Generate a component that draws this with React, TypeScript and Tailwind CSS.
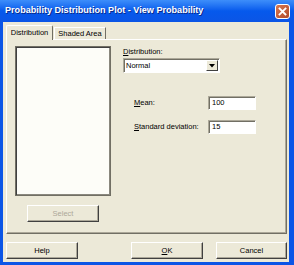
import React from "react";

const font = { fontFamily: '"Liberation Sans", Arial, sans-serif' };

function Btn({ children, disabled, w = "w-[72px]" }: { children: React.ReactNode; disabled?: boolean; w?: string }) {
  return (
    <div
      className={`${w} h-[17px] flex items-center justify-center bg-[#ECE9D8] border border-t-white border-l-white border-b-[#404040] border-r-[#404040] shadow-[inset_-1px_-1px_0_#ACA899] text-[7.5px] ${disabled ? "text-[#ACA899]" : "text-black"}`}
    >
      {children}
    </div>
  );
}

function Field({ value }: { value: string }) {
  return (
    <div className="w-[48px] h-[14px] bg-white border border-t-[#ACA899] border-l-[#ACA899] border-b-white border-r-white shadow-[inset_1px_1px_0_#716F64] flex items-center pl-[3px] text-[7.5px] text-black">
      {value}
    </div>
  );
}

export default function App() {
  return (
    <div className="w-[294px] h-[265px] flex flex-col bg-[#0B55E6] overflow-hidden" style={font}>
      {/* Title bar */}
      <div className="h-[22px] shrink-0 flex items-center justify-between pl-[5px] pr-[4px] bg-gradient-to-b from-[#3D8EFA] via-[#0659EC] to-[#0B55E6]">
        <span className="text-white font-bold text-[9.1px] leading-none whitespace-nowrap [text-shadow:1px_1px_0_#0A2A8A]">
          Probability Distribution Plot - View Probability
        </span>
        <div className="w-[15px] h-[15px] rounded-[3px] border border-white bg-gradient-to-br from-[#D9774F] to-[#B04A2A] flex items-center justify-center">
          <svg width="9" height="9" viewBox="0 0 9 9">
            <path d="M1.5 1.5 L7.5 7.5 M7.5 1.5 L1.5 7.5" stroke="white" strokeWidth="1.8" strokeLinecap="square" />
          </svg>
        </div>
      </div>

      {/* Body */}
      <div className="flex-1 ml-[3px] mr-[5px] mb-[3px] bg-[#ECE9D8] flex flex-col pl-[3px] pr-[2px] pt-[3px]">
        {/* Tabs */}
        <div className="flex items-end h-[14px] relative z-10">
          <div className="h-[15px] w-[47px] -mb-[1px] bg-[#ECE9D8] border border-b-0 border-t-white border-l-white border-r-[#716F64] rounded-t-[2px] flex items-center justify-center text-[7.5px] text-black">
            Distribution
          </div>
          <div className="h-[12px] w-[52px] ml-[1px] border border-b-0 border-t-white border-l-white border-r-[#716F64] flex items-center justify-center text-[7.5px] text-black">
            Shaded Area
          </div>
        </div>

        {/* Panel */}
        <div className="h-[195px] border border-t-white border-l-white border-b-[#716F64] border-r-[#716F64] shadow-[inset_-1px_-1px_0_#ACA899] flex">
          {/* Left column */}
          <div className="flex flex-col items-start pl-[8px] pt-[6px]">
            <div className="w-[96px] h-[150px] bg-[#FDFDF8] border border-[#716F64] shadow-[inset_1px_1px_0_#404040,inset_-1px_-1px_0_#8A887E]" />
            <div className="mt-[9px] ml-[12px]">
              <Btn disabled>Select</Btn>
            </div>
          </div>

          {/* Right column */}
          <div className="flex flex-col pl-[12px] pt-[8px] text-[7.5px] text-black">
            <div className="leading-none h-[10px]">
              <span className="underline">D</span>istribution:
            </div>
            <div className="w-[97px] h-[15px] bg-white border border-t-[#ACA899] border-l-[#ACA899] border-b-white border-r-white shadow-[inset_1px_1px_0_#716F64] flex items-center justify-between pl-[2px] pr-[1px]">
              <span>Normal</span>
              <div className="w-[12px] h-[11px] bg-[#ECE9D8] border border-t-white border-l-white border-b-[#404040] border-r-[#404040] flex items-center justify-center">
                <svg width="6" height="4" viewBox="0 0 6 4">
                  <path d="M0 0 H6 L3 3.5 Z" fill="black" />
                </svg>
              </div>
            </div>

            <div className="mt-[23px] flex items-center">
              <div className="w-[85px] pl-[11px]">
                <span className="underline">M</span>ean:
              </div>
              <Field value="100" />
            </div>
            <div className="mt-[10px] flex items-center">
              <div className="w-[85px] pl-[11px] whitespace-nowrap">
                <span className="underline">S</span>tandard deviation:
              </div>
              <Field value="15" />
            </div>
          </div>
        </div>

        {/* Bottom buttons */}
        <div className="mt-[8px] flex items-center">
          <Btn>Help</Btn>
          <div className="ml-[53px]">
            <Btn>
              <span className="underline">O</span>K
            </Btn>
          </div>
          <div className="ml-[13px]">
            <Btn w="w-[71px]">Cancel</Btn>
          </div>
        </div>
      </div>
    </div>
  );
}
